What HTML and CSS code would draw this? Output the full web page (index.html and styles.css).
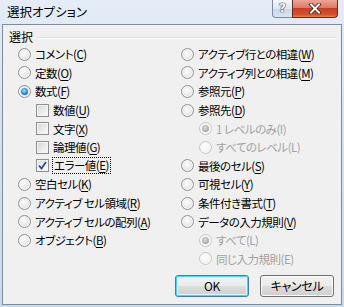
FILE: index.html
```html
<!DOCTYPE html>
<html lang="ja">
<head>
<meta charset="utf-8">
<title>選択オプション</title>
<link rel="stylesheet" href="styles.css">
</head>
<body>
<div class="window">
  <div class="titlebar">
    <span class="title">選択オプション</span>
    <div class="caption">
      <span class="cap-help">?</span>
      <span class="cap-close"><svg width="14" height="11" viewBox="0 0 14 11"><path d="M3 1.5 L11 9.5 M11 1.5 L3 9.5" stroke="#4a1a14" stroke-width="3.6" stroke-linecap="square"/><path d="M3 1.5 L11 9.5 M11 1.5 L3 9.5" stroke="#ffffff" stroke-width="2" stroke-linecap="square"/></svg></span>
    </div>
  </div>
  <div class="client">
    <div class="group-label"><span>選択</span><span class="group-line"></span></div>
    <div class="columns">
      <div class="col">
        <div class="item"><span class="radio"></span>コメント(<u>C</u>)</div>
        <div class="item"><span class="radio"></span>定数(<u>O</u>)</div>
        <div class="item"><span class="radio checked"></span>数式(<u>F</u>)</div>
        <div class="item sub"><span class="check"></span>数値(<u>U</u>)</div>
        <div class="item sub"><span class="check"></span>文字(<u>X</u>)</div>
        <div class="item sub"><span class="check"></span>論理値(<u>G</u>)</div>
        <div class="item sub"><span class="check checked"><svg width="9" height="9" viewBox="0 0 9 9"><path d="M1 4.5 L3.5 7.5 L8 1" fill="none" stroke="#2a4d93" stroke-width="1.8"/></svg></span><span class="focus">エラー値(<u>E</u>)</span></div>
        <div class="item"><span class="radio"></span>空白セル(<u>K</u>)</div>
        <div class="item"><span class="radio"></span>アクティブ セル領域(<u>R</u>)</div>
        <div class="item"><span class="radio"></span>アクティブ セルの配列(<u>A</u>)</div>
        <div class="item"><span class="radio"></span>オブジェクト(<u>B</u>)</div>
      </div>
      <div class="col">
        <div class="item"><span class="radio"></span>アクティブ行との相違(<u>W</u>)</div>
        <div class="item"><span class="radio"></span>アクティブ列との相違(<u>M</u>)</div>
        <div class="item"><span class="radio"></span>参照元(<u>P</u>)</div>
        <div class="item"><span class="radio"></span>参照先(<u>D</u>)</div>
        <div class="item sub2 disabled"><span class="radio checked"></span>1 レベルのみ(I)</div>
        <div class="item sub2 disabled"><span class="radio"></span>すべてのレベル(L)</div>
        <div class="item"><span class="radio"></span>最後のセル(<u>S</u>)</div>
        <div class="item"><span class="radio"></span>可視セル(<u>Y</u>)</div>
        <div class="item"><span class="radio"></span>条件付き書式(<u>T</u>)</div>
        <div class="item"><span class="radio"></span>データの入力規則(<u>V</u>)</div>
        <div class="item sub2 disabled"><span class="radio checked"></span>すべて(L)</div>
        <div class="item sub2 disabled"><span class="radio"></span>同じ入力規則(E)</div>
      </div>
    </div>
    <div class="buttons">
      <button class="btn default">OK</button>
      <button class="btn">キャンセル</button>
    </div>
  </div>
</div>
</body>
</html>
```

FILE: styles.css
```css
* { box-sizing: border-box; }
html, body { margin: 0; padding: 0; }
body {
  width: 344px;
  height: 307px;
  overflow: hidden;
  font-family: "Noto Sans CJK JP", "Noto Sans", sans-serif;
  font-size: 11.5px;
  letter-spacing: -0.5px;
  font-feature-settings: "palt";
  color: #000;
}
.window {
  width: 344px;
  height: 307px;
  display: flex;
  flex-direction: column;
  padding: 0 2px 2px 2px;
  background: linear-gradient(180deg, #e4edf7 0%, #d3e1f0 40%, #c9daec 100%);
}
.titlebar {
  height: 24px;
  display: flex;
  justify-content: space-between;
  align-items: flex-start;
  flex: none;
}
.title {
  margin-left: 5px;
  margin-top: 3px;
  font-size: 12.5px;
  letter-spacing: 0;
  line-height: 18px;
  color: #000;
}
.caption {
  display: flex;
  margin-right: 4px;
}
.cap-help {
  width: 20px;
  height: 18px;
  border: 1px solid #7b8ba0;
  border-right: none;
  border-top: none;
  border-radius: 0 0 0 4px;
  background: linear-gradient(180deg, #f3f7fb 0%, #dfe8f2 50%, #cbd8e7 51%, #d9e4f0 100%);
  font-family: "DejaVu Sans", sans-serif;
  font-weight: bold;
  font-size: 12px;
  letter-spacing: 0;
  line-height: 16px;
  text-align: center;
  color: #fff;
  text-shadow: 0 0 1px #2a3340, 0 0 1px #2a3340, 0 0 1px #2a3340;
}
.cap-close {
  width: 46px;
  height: 18px;
  border: 1px solid #6d2a22;
  border-top: none;
  border-radius: 0 0 4px 0;
  background: linear-gradient(180deg, #eba795 0%, #de7a62 45%, #c83e24 50%, #d2502f 85%, #e2824f 100%);
  display: flex;
  align-items: center;
  justify-content: center;
}
.client {
  flex: 1;
  background: #f0f0f0;
  border: 1px solid #7f8c99;
  display: flex;
  flex-direction: column;
  padding: 4px 0 7px 0;
}
.group-label {
  height: 16px;
  display: flex;
  align-items: center;
  padding-left: 6px;
  padding-right: 5px;
  line-height: 16px;
  font-size: 12px;
  letter-spacing: 0;
}
.group-line {
  flex: 1;
  height: 2px;
  margin-left: 5px;
  border-top: 1px solid #d5dfe5;
  border-bottom: 1px solid #ffffff;
  margin-top: 2px;
}
.columns {
  display: grid;
  grid-template-columns: 163px 1fr;
  padding-left: 15px;
}
.item {
  height: 18.6px;
  display: flex;
  align-items: center;
  white-space: nowrap;
  line-height: 16px;
}
.item u { text-decoration: underline; text-underline-offset: 2px; }
.item.sub { padding-left: 18px; }
.item.sub2 { padding-left: 18px; }
.item.disabled { color: #a2a2a2; }
.radio {
  width: 13px;
  height: 13px;
  flex: none;
  border-radius: 50%;
  border: 1px solid #939393;
  background: radial-gradient(circle at 45% 40%, #ffffff 0%, #ececec 45%, #d2d2d2 100%);
  box-shadow: inset 0 0 0 1px #f7f7f7;
  margin-right: 4px;
  position: relative;
}
.radio.checked::after {
  content: "";
  position: absolute;
  left: 2px;
  top: 2px;
  width: 7px;
  height: 7px;
  border-radius: 50%;
  background: radial-gradient(circle at 45% 40%, #b6ecff 0%, #3ea2e8 40%, #1a5fa8 80%, #184b86 100%);
}
.disabled .radio {
  border-color: #c8c8c8;
  background: radial-gradient(circle at 45% 40%, #ffffff 0%, #f3f3f3 60%, #e6e6e6 100%);
}
.disabled .radio.checked::after {
  background: radial-gradient(circle at 45% 40%, #e2e2e2 0%, #b4b4b4 50%, #9a9a9a 100%);
}
.check {
  width: 13px;
  height: 13px;
  flex: none;
  border: 1px solid #8f8f8f;
  background: linear-gradient(135deg, #cfd2d6 0%, #eeeeee 60%, #fafafa 100%);
  box-shadow: inset 0 0 0 1px #f4f4f4;
  margin-right: 4px;
  display: flex;
  align-items: center;
  justify-content: center;
}
.check.checked {
  background: linear-gradient(135deg, #d9dce0 0%, #f2f2f2 60%, #fbfbfb 100%);
}
.focus {
  outline: 1px dotted #000;
  outline-offset: 0;
  padding: 0 1px;
  line-height: 15px;
}
.buttons {
  margin-top: auto;
  display: flex;
  justify-content: flex-end;
  gap: 11px;
  padding-right: 7px;
}
.btn {
  width: 74px;
  height: 22px;
  border: 1px solid #707070;
  border-radius: 3px;
  background: linear-gradient(180deg, #f2f2f2 0%, #ebebeb 48%, #dddddd 52%, #cfcfcf 100%);
  box-shadow: inset 0 0 0 1px #fbfbfb;
  font-family: "Noto Sans CJK JP", "Noto Sans", sans-serif;
  font-feature-settings: "palt";
  font-size: 12px;
  letter-spacing: -0.3px;
  line-height: 18px;
  color: #000;
  padding: 0;
}
.btn.default {
  border-color: #3c7fb1;
  box-shadow: inset 0 0 0 1px #48d7fb, inset 0 0 0 2px #e5f5fc;
}
```
